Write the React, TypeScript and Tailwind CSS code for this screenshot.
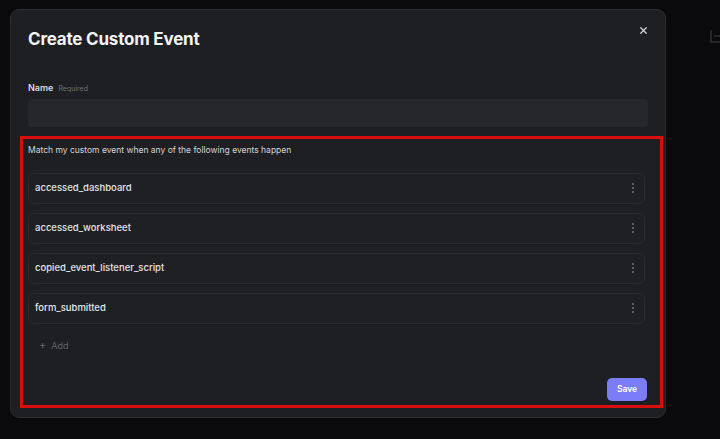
import React from 'react';
import { X } from 'lucide-react';

const events = [
  'accessed_dashboard',
  'accessed_worksheet',
  'copied_event_listener_script',
  'form_submitted',
];

const Kebab: React.FC = () => (
  <svg width="4" height="12" viewBox="0 0 4 12" className="text-[#6b6d73]">
    <circle cx="2" cy="2" r="1.1" fill="currentColor" />
    <circle cx="2" cy="6" r="1.1" fill="currentColor" />
    <circle cx="2" cy="10" r="1.1" fill="currentColor" />
  </svg>
);

const EventRow: React.FC<{ name: string }> = ({ name }) => (
  <div className="h-[31px] flex items-center justify-between pl-[6px] pr-[9px] rounded-[6px] border border-[#2a2b2f] bg-[#1f2023]">
    <span className="text-[9.5px] font-medium text-[#e4e5e8]">{name}</span>
    <Kebab />
  </div>
);

export default function App() {
  return (
    <div
      className="relative min-h-screen h-[439px] overflow-hidden bg-[#0a0a0c] pt-[9px] pl-[10px]"
      style={{ fontFamily: 'Inter, "Noto Sans", sans-serif' }}
    >
      {/* faint icon from the page behind the dialog */}
      <svg
        width="14"
        height="14"
        viewBox="0 0 14 14"
        className="absolute left-[710px] top-[29px] text-[#2e2f33]"
        fill="none"
        stroke="currentColor"
        strokeWidth="1.5"
      >
        <path d="M1 1v12h10" />
        <path d="M4 7h9" />
      </svg>

      <div className="w-[656px] h-[409px] rounded-[9px] bg-[#1e1f22] border border-[#2b2c30] px-[17px] pt-[18px] flex flex-col">
        <div className="flex items-start justify-between">
          <h1 className="text-[17px] leading-[22px] font-bold tracking-[-0.2px] text-[#f2f3f5]">
            Create Custom Event
          </h1>
          <button className="-mt-[6px] -mr-[3px] w-[16px] h-[16px] flex items-center justify-center text-[#d8d9dc]">
            <X size={11} strokeWidth={2.6} />
          </button>
        </div>

        <div className="mt-[31px] flex items-baseline gap-[5px]">
          <span className="text-[9px] font-semibold text-[#d9dadd]">Name</span>
          <span className="text-[7px] text-[#6e7076]">Required</span>
        </div>
        <div className="mt-[4px] h-[28px] w-[620px] rounded-[4px] bg-[#26272b]" />

        <div className="mt-[9px] -ml-[8px] -mr-[15px] h-[272px] border-[3px] border-[#d90f0f] pl-[5px] pr-[13px] pt-[4px] flex flex-col">
          <p className="text-[8.5px] leading-[14px] text-[#d4d5d8]">
            Match my custom event when any of the following events happen
          </p>
          <div className="mt-[16px] flex flex-col gap-[9px] pr-[2px]">
            {events.map(e => (
              <EventRow key={e} name={e} />
            ))}
          </div>
          <div className="mt-[15px] flex items-center gap-[5px] pl-[11px] text-[#5f6167]">
            <span className="text-[11px] leading-none">+</span>
            <span className="text-[9px]">Add</span>
          </div>
          <div className="mt-auto mb-[4px] flex justify-end">
            <button className="w-[40px] h-[23px] rounded-[5px] bg-[#7b7cf7] text-white text-[8.5px] font-semibold">
              Save
            </button>
          </div>
        </div>
      </div>
    </div>
  );
}
